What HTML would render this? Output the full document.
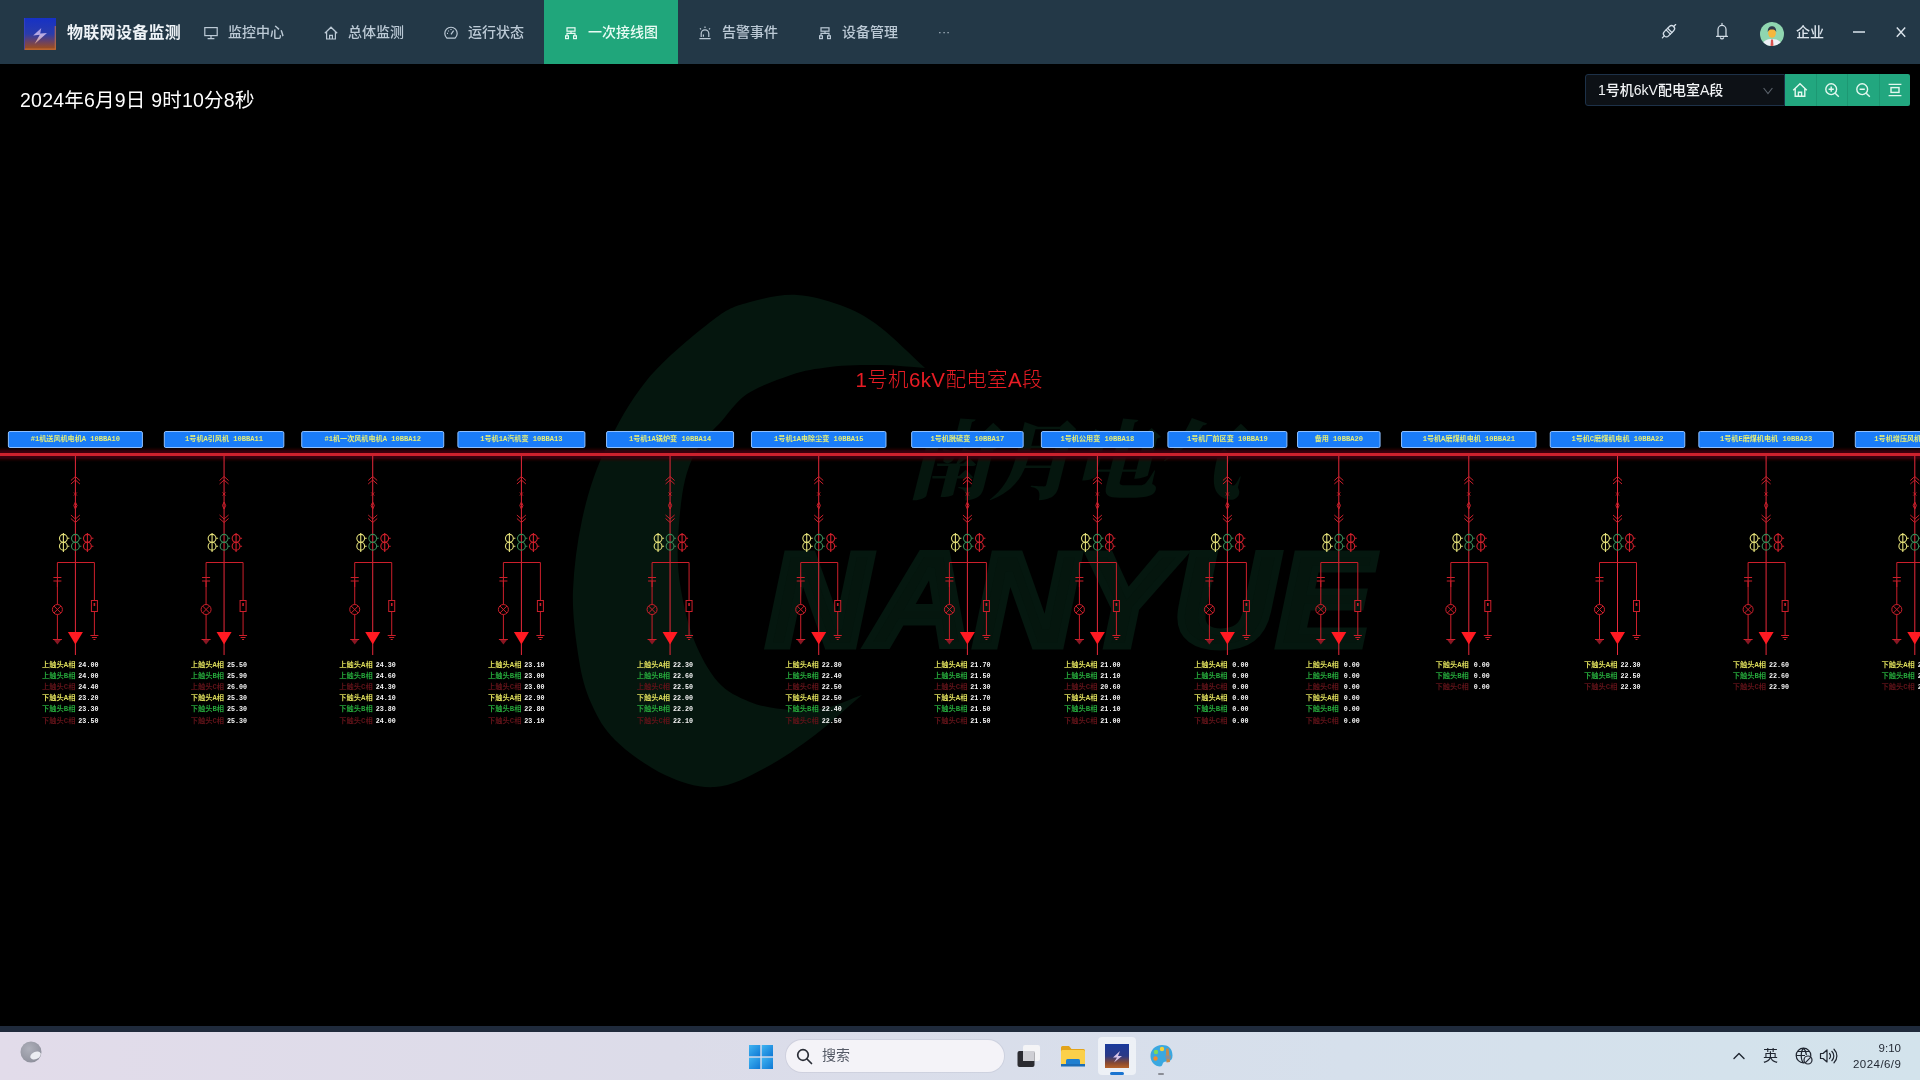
<!DOCTYPE html>
<html lang="zh-CN">
<head>
<meta charset="utf-8">
<title>物联网设备监测</title>
<style>
*{box-sizing:border-box;margin:0;padding:0}
html,body{width:1920px;height:1080px;overflow:hidden;background:#000;}
body{font-family:"Liberation Sans","Noto Sans CJK SC",sans-serif;color:#fff;position:relative}
.hdr{position:absolute;left:0;top:0;width:1920px;height:64px;background:#233847;}
.logo{position:absolute;left:24px;top:18px;width:32px;height:32px}
.brand{position:absolute;left:67px;top:1px;height:64px;line-height:63px;font-size:16px;font-weight:bold;color:#eef3f7;letter-spacing:0.3px;white-space:nowrap}
.nav{position:absolute;left:184px;top:0;height:64px;display:flex}
.nav .it{height:64px;padding:0 20px;display:flex;align-items:center;color:#bccad6;font-size:14px;white-space:nowrap}
.nav .it svg{width:14px;height:14px;margin-right:10px;flex:none;position:relative;top:0.5px}
.nav .it.on{background:#20a67b;color:#e9fbf4}
.nav .it span{display:inline-block;position:relative;top:-1px;font-weight:500}
.hr{position:absolute;top:0;height:64px}
.hr svg{position:absolute}
.user{position:absolute;left:1796px;top:1px;line-height:63px;font-size:14px;font-weight:500;color:#dbe4ec}
.date{position:absolute;left:20px;top:86px;font-size:19.5px;line-height:28px;color:#fff;white-space:nowrap;letter-spacing:0.22px}
.sel{position:absolute;left:1585px;top:74px;width:200px;height:32px;border:1px solid #1d3148;border-radius:3px 0 0 3px;background:#0d1116;font-size:14px;line-height:30px;padding-left:12px;color:#f2f4f6;white-space:nowrap;font-weight:500}
.sel svg{position:absolute;left:177px;top:12px}
.btns{position:absolute;left:1785px;top:74px;width:125px;height:32px;background:#22a77f;border-radius:0 2px 2px 0;display:flex}
.btns div{flex:1;position:relative;border-left:1px solid #1d9873}
.btns div:first-child{border-left:none}
.btns svg{position:absolute;left:50%;top:50%;width:16px;height:16px;margin:-8px 0 0 -8px}
.diag{position:absolute;left:0;top:64px;will-change:transform}
.hdr .brand,.hdr .nav,.hdr .user,.date,.sel,.search,.clock,.ime{will-change:transform}
.diag .lb,.diag .rl,.diag .rv{font-family:"Liberation Mono","Noto Sans Mono CJK SC","Noto Sans CJK SC",monospace;font-weight:bold}
.lb{font-size:7.1px;fill:#e4ee7a}
.rl{font-size:6.8px}
.rv{font-size:6.7px;fill:#f4f4f4}
.strip{position:absolute;left:0;top:1026px;width:1920px;height:6px;background:#1f2a3b}
.tb{position:absolute;left:0;top:1032px;width:1920px;height:48px;background:linear-gradient(90deg,#e2dcea 0%,#dcdce9 35%,#d6e0ec 70%,#d3e3ec 100%)}
.tb svg{position:absolute}
.search{position:absolute;left:786px;top:8px;width:218px;height:32px;border-radius:16px;background:#f4f3f8;box-shadow:0 0 0 1px rgba(120,120,150,.12);font-size:14px;line-height:31px;color:#555a66;padding-left:36px}
.clock{position:absolute;right:19px;top:8px;text-align:right;font-size:11.5px;line-height:16px;color:#1f2530}
.ime{position:absolute;left:1763px;top:14px;font-size:15px;line-height:20px;color:#1f2530}
.actbg{position:absolute;left:1098px;top:5px;width:38px;height:38px;border-radius:4px;background:rgba(255,255,255,.55)}
</style>
</head>
<body>
<div class="hdr">
  <svg class="logo" viewBox="0 0 32 32">
    <defs><linearGradient id="lg" x1="0" y1="0" x2="0" y2="1"><stop offset="0" stop-color="#1631c6"/><stop offset=".5" stop-color="#2a3cab"/><stop offset=".74" stop-color="#6b4263"/><stop offset="1" stop-color="#a9500f"/></linearGradient><linearGradient id="lb" x1="0" y1="0" x2="0" y2="1"><stop offset="0" stop-color="#a99cf0"/><stop offset=".5" stop-color="#cdbbe6"/><stop offset="1" stop-color="#e6a684"/></linearGradient></defs>
    <rect width="32" height="32" fill="url(#lg)"/>
    <path d="M0.500 0V31.500" stroke="#3a44c8" stroke-opacity=".7"/>
    <path d="M1 31.200H31.300V8" fill="none" stroke="#c87444" stroke-width="1.200" stroke-opacity=".75"/>
    <path d="M17.300 10L9.200 17.400L15.800 16.800L10.600 26L23 15L16.200 15.600Z" fill="url(#lb)" fill-opacity=".9"/>
  </svg>
  <div class="brand">物联网设备监测</div>
  <div class="nav">
    <div class="it"><svg viewBox="0 0 14 14" fill="none" stroke="currentColor" stroke-width="1.2"><rect x="0.8" y="1.6" width="12.4" height="8"/><path d="M7 9.6V12.2M3.6 12.6H10.4"/></svg><span>监控中心</span></div>
    <div class="it"><svg viewBox="0 0 14 14" fill="none" stroke="currentColor" stroke-width="1.2"><path d="M0.8 7.2L7 1.2L13.2 7.2M2.6 6V13H11.4V6M5.6 13V9.4H8.4V13"/></svg><span>总体监测</span></div>
    <div class="it"><svg viewBox="0 0 14 14" fill="none" stroke="currentColor" stroke-width="1.2"><path d="M3 12.2A6.2 6.2 0 1 1 11 12.2Z"/><path d="M7 8.4L9.6 4.6M3 7.4H4M7 3V4M4.2 4.6L4.9 5.3"/></svg><span>运行状态</span></div>
    <div class="it on"><svg viewBox="0 0 14 14" fill="none" stroke="currentColor" stroke-width="1.2"><rect x="3" y="1.8" width="8" height="3.4"/><path d="M7 5.2V7.4M3 9.8V7.4H11V9.8"/><rect x="1.6" y="9.8" width="2.8" height="2.8"/><rect x="9.6" y="9.8" width="2.8" height="2.8"/></svg><span>一次接线图</span></div>
    <div class="it"><svg viewBox="0 0 14 14" fill="none" stroke="currentColor" stroke-width="1.2"><path d="M3.2 11V7.6A3.8 3.8 0 0 1 10.8 7.6V11M1.4 12.6H12.6M7 0.6V2M2 2.4L3 3.4M12 2.4L11 3.4M5.4 10.8V8.6"/></svg><span>告警事件</span></div>
    <div class="it"><svg viewBox="0 0 14 14" fill="none" stroke="currentColor" stroke-width="1.2"><rect x="3" y="1.8" width="8" height="3.4"/><path d="M7 5.2V7.4M3 9.8V7.4H11V9.8"/><rect x="1.6" y="9.8" width="2.8" height="2.8"/><rect x="9.6" y="9.8" width="2.8" height="2.8"/></svg><span>设备管理</span></div>
    <div class="it" style="font-weight:bold;letter-spacing:0.5px;font-size:11px"><span style="top:0">···</span></div>
  </div>
  <!-- right icons -->
  <svg style="position:absolute;left:1661px;top:23px" width="16" height="16" viewBox="0 0 16 16" fill="none" stroke="#d3dee8" stroke-width="1.25" stroke-linecap="round" stroke-linejoin="round"><g transform="translate(8 8.200) rotate(-45)"><path d="M-3.600 -3H3.600A3 3 0 0 1 3.600 3H-3.600A3 3 0 0 1 -3.600 -3Z"/><path d="M-1.100 -3V3M1.100 -3V3M-6.600 0H-9.400M6.600 0H9.400"/></g></svg>
  <svg style="position:absolute;left:1713.5px;top:22px" width="16" height="18" viewBox="0 0 16 18" fill="none" stroke="#d3dee8" stroke-width="1.25" stroke-linecap="round" stroke-linejoin="round"><path d="M2.600 14.400H13.400M4 14.400V7.400A4 4 0 0 1 12 7.400V14.400M8 1.400V3.200M6.400 15.800A1.700 1.700 0 0 0 9.600 15.800"/></svg>
  <svg style="position:absolute;left:1760px;top:22px" width="24" height="24" viewBox="0 0 24 24"><defs><clipPath id="av"><circle cx="12" cy="12" r="12"/></clipPath></defs><g clip-path="url(#av)"><rect width="24" height="24" fill="#8fd6b0"/><path d="M2 24C3 18.500 7 17 12 17S21 18.500 22 24Z" fill="#eef0f6"/><path d="M11 17.500H13L13.500 24H10.500Z" fill="#d9534f"/><ellipse cx="12" cy="11" rx="3.900" ry="4.800" fill="#f6b73c"/><path d="M7.800 10C7.500 5.500 10 4.300 12 4.300S16.500 5.500 16.200 10C15.500 8 14 7.600 12 7.600S8.500 8 7.800 10Z" fill="#2f3a4a"/></g></svg>
  <div class="user">企业</div>
  <svg style="position:absolute;left:1852px;top:30px" width="14" height="4" viewBox="0 0 14 4"><path d="M1 2H13" stroke="#dbe4ec" stroke-width="1.500"/></svg>
  <svg style="position:absolute;left:1895px;top:26px" width="12" height="12" viewBox="0 0 12 12"><path d="M1.800 1.500L10.200 10.800M10.200 1.500L1.800 10.800" stroke="#dbe4ec" stroke-width="1.400"/></svg>
</div>

<div class="date">2024年6月9日 9时10分8秒</div>
<div class="sel">1号机6kV配电室A段<svg width="10" height="8" viewBox="0 0 10 8"><path d="M0.600 1L5 6.600L9.400 1" fill="none" stroke="#5b626b" stroke-width="1.100"/></svg></div>
<div class="btns">
  <div><svg viewBox="0 0 16 16" fill="none" stroke="#e3f8ef" stroke-width="1.400"><path d="M1.200 8.200L8 1.800L14.800 8.200M3.200 6.800V14.200H12.800V6.800M6.400 14.200V10.200H9.600V14.200"/></svg></div>
  <div><svg viewBox="0 0 16 16" fill="none" stroke="#e3f8ef" stroke-width="1.400"><circle cx="7.200" cy="7.200" r="5.400"/><path d="M11.200 11.200L14.800 14.800M4.600 7.200H9.800M7.200 4.600V9.800"/></svg></div>
  <div><svg viewBox="0 0 16 16" fill="none" stroke="#e3f8ef" stroke-width="1.400"><circle cx="7.200" cy="7.200" r="5.400"/><path d="M11.200 11.200L14.800 14.800M4.600 7.200H9.800"/></svg></div>
  <div><svg viewBox="0 0 16 16" fill="none" stroke="#e3f8ef" stroke-width="1.400"><path d="M1.600 2.400H14.400M1.600 13.600H14.400"/><rect x="4" y="5.600" width="8" height="4.800"/></svg></div>
</div>

<svg class="diag" width="1920" height="962" viewBox="0 64 1920 962">
<defs>
<g id="feeder" fill="none" stroke="#cc1f2b" stroke-width="1">
  <path d="M0 456V655" stroke="#e8283a"/>
  <path d="M-4.5 480.5L0 476.5L4.5 480.5M-4.5 484L0 480L4.5 484"/>
  <path d="M-1.5 492.5L1.5 495.5M1.5 492.5L-1.5 495.5"/>
  <path d="M0 502L1.6 505.5L0 509L-1.6 505.5Z"/>
  <path d="M-4.5 515L0 519L4.5 515M-4.5 518.5L0 522.5L4.5 518.5"/>
  <g id="ct">
  </g>
  <path d="M-18 587V562.5H19V600"/>
  <path d="M-22 577.5H-14M-22 581H-14"/>
  <path d="M-18 581V604.5M-18 614.5V639.5"/>
  <circle cx="-18" cy="609.5" r="5"/>
  <path d="M-21.5 606L-14.5 613M-14.5 606L-21.5 613"/>
  <path d="M-22.5 639.5H-13.5"/><path d="M-21.5 640H-14.5L-18 644.5Z" fill="#8a1622" stroke="none"/>
  <rect x="16" y="600.5" width="6" height="11"/>
  <path d="M19 603V606" stroke-width="1.6"/>
  <path d="M19 611.5V635M15 635.5H23M16.5 637.5H21.5M18 639.5H20"/>
  <path d="M-7.5 632H7.5L0 644.5Z" fill="#ff1a22" stroke="none"/>
</g>
<filter id="bl" x="-5%" y="-100%" width="110%" height="300%"><feGaussianBlur stdDeviation="0 1.6"/></filter>
<g id="cts" fill="none" stroke-width="1.1">
  <g stroke="#e4e07a"><circle cx="-12" cy="538.3" r="3.9"/><circle cx="-12" cy="546.2" r="3.9"/><path d="M-12 533V552M-8 538.3H-6M-8 546.2H-6"/></g>
  <g stroke="#3a8a58"><circle cx="0" cy="538.3" r="3.9"/><circle cx="0" cy="546.2" r="3.9"/><path d="M4 538.3H6M4 546.2H6"/></g>
  <g stroke="#d0202c"><circle cx="12" cy="538.3" r="3.9"/><circle cx="12" cy="546.2" r="3.9"/><path d="M12 533V552M16 538.3H18M16 546.2H18"/></g>
</g>
</defs>
<g class="wm" fill="#05160e">
<path d="M925 368C910 354 894 338 880 327C866 316 854 310 840 305C826 300 812 296 797 295C782 294 764 298 750 302C736 306 730 307 713 320C696 333 665 358 647 380C629 402 616 427 605 450C594 473 587 497 582 520C577 543 574 567 573 590C572 613 576 641 579 660C582 679 586 692 592 705C598 718 603 728 615 740C627 752 648 767 665 775C682 783 698 788 715 787C732 786 748 777 765 768C782 759 799 747 815 735C831 723 846 708 862 695C850 699 837 706 825 708C813 710 802 711 790 710C778 709 762 707 750 702C738 697 727 692 718 682C709 672 700 655 694 640C688 625 684 607 681 590C678 573 677 558 678 540C679 522 681 496 685 480C689 464 694 454 700 445C706 436 711 432 719 424C727 416 735 402 747 394C759 386 777 380 791 375C805 370 815 369 830 367C845 365 864 365 880 365C896 365 910 367 925 368Z"/>
<text x="766" y="646" font-size="133" font-weight="bold" font-style="italic" stroke="#05170f" stroke-width="7" stroke-linejoin="miter" textLength="606" lengthAdjust="spacingAndGlyphs" font-family="Liberation Sans, sans-serif">NANYUE</text>
<text x="905" y="492" font-size="86" font-weight="900" font-style="italic" textLength="335" lengthAdjust="spacing" font-family="Liberation Serif, Noto Serif CJK SC, serif">南月电气</text>
</g>
<text x="949" y="387" text-anchor="middle" fill="#e81c24" font-size="20.5" font-family="Liberation Sans, Noto Sans CJK SC, sans-serif" font-weight="300" textLength="187">1号机6kV配电室A段</text>
<rect x="0" y="449.5" width="1920" height="10" fill="#3a0508" filter="url(#bl)"/>
<rect x="0" y="453" width="1920" height="3" fill="#cc212d"/>
<rect x="8.4" y="431.5" width="134.0" height="16" rx="1.5" fill="#1a7cf8" stroke="#8fc0ff" stroke-width="1"/>
<text x="75.4" y="440.6" text-anchor="middle" class="lb">#1机送风机电机A  10BBA10</text>
<use href="#feeder" x="75.4"/><use href="#cts" x="75.4"/>
<text x="75.4" y="667" text-anchor="end" class="rl" fill="#dcdc5a" textLength="33.4" lengthAdjust="spacingAndGlyphs">上触头A相</text><text x="88.4" y="667" text-anchor="middle" class="rv">24.00</text>
<text x="75.4" y="678" text-anchor="end" class="rl" fill="#25a53a" textLength="33.4" lengthAdjust="spacingAndGlyphs">上触头B相</text><text x="88.4" y="678" text-anchor="middle" class="rv">24.00</text>
<text x="75.4" y="689" text-anchor="end" class="rl" fill="#621319" textLength="33.4" lengthAdjust="spacingAndGlyphs">上触头C相</text><text x="88.4" y="689" text-anchor="middle" class="rv">24.40</text>
<text x="75.4" y="700" text-anchor="end" class="rl" fill="#dcdc5a" textLength="33.4" lengthAdjust="spacingAndGlyphs">下触头A相</text><text x="88.4" y="700" text-anchor="middle" class="rv">23.20</text>
<text x="75.4" y="711" text-anchor="end" class="rl" fill="#25a53a" textLength="33.4" lengthAdjust="spacingAndGlyphs">下触头B相</text><text x="88.4" y="711" text-anchor="middle" class="rv">23.30</text>
<text x="75.4" y="723" text-anchor="end" class="rl" fill="#621319" textLength="33.4" lengthAdjust="spacingAndGlyphs">下触头C相</text><text x="88.4" y="723" text-anchor="middle" class="rv">23.50</text>
<rect x="164.32" y="431.5" width="119.5" height="16" rx="1.5" fill="#1a7cf8" stroke="#8fc0ff" stroke-width="1"/>
<text x="224.07" y="440.6" text-anchor="middle" class="lb">1号机A引风机  10BBA11</text>
<use href="#feeder" x="224.07"/><use href="#cts" x="224.07"/>
<text x="224.07" y="667" text-anchor="end" class="rl" fill="#dcdc5a" textLength="33.4" lengthAdjust="spacingAndGlyphs">上触头A相</text><text x="237.07" y="667" text-anchor="middle" class="rv">25.50</text>
<text x="224.07" y="678" text-anchor="end" class="rl" fill="#25a53a" textLength="33.4" lengthAdjust="spacingAndGlyphs">上触头B相</text><text x="237.07" y="678" text-anchor="middle" class="rv">25.90</text>
<text x="224.07" y="689" text-anchor="end" class="rl" fill="#621319" textLength="33.4" lengthAdjust="spacingAndGlyphs">上触头C相</text><text x="237.07" y="689" text-anchor="middle" class="rv">26.00</text>
<text x="224.07" y="700" text-anchor="end" class="rl" fill="#dcdc5a" textLength="33.4" lengthAdjust="spacingAndGlyphs">下触头A相</text><text x="237.07" y="700" text-anchor="middle" class="rv">25.30</text>
<text x="224.07" y="711" text-anchor="end" class="rl" fill="#25a53a" textLength="33.4" lengthAdjust="spacingAndGlyphs">下触头B相</text><text x="237.07" y="711" text-anchor="middle" class="rv">25.30</text>
<text x="224.07" y="723" text-anchor="end" class="rl" fill="#621319" textLength="33.4" lengthAdjust="spacingAndGlyphs">下触头C相</text><text x="237.07" y="723" text-anchor="middle" class="rv">25.30</text>
<rect x="301.73" y="431.5" width="142.0" height="16" rx="1.5" fill="#1a7cf8" stroke="#8fc0ff" stroke-width="1"/>
<text x="372.73" y="440.6" text-anchor="middle" class="lb">#1机一次风机电机A  10BBA12</text>
<use href="#feeder" x="372.73"/><use href="#cts" x="372.73"/>
<text x="372.73" y="667" text-anchor="end" class="rl" fill="#dcdc5a" textLength="33.4" lengthAdjust="spacingAndGlyphs">上触头A相</text><text x="385.73" y="667" text-anchor="middle" class="rv">24.30</text>
<text x="372.73" y="678" text-anchor="end" class="rl" fill="#25a53a" textLength="33.4" lengthAdjust="spacingAndGlyphs">上触头B相</text><text x="385.73" y="678" text-anchor="middle" class="rv">24.60</text>
<text x="372.73" y="689" text-anchor="end" class="rl" fill="#621319" textLength="33.4" lengthAdjust="spacingAndGlyphs">上触头C相</text><text x="385.73" y="689" text-anchor="middle" class="rv">24.30</text>
<text x="372.73" y="700" text-anchor="end" class="rl" fill="#dcdc5a" textLength="33.4" lengthAdjust="spacingAndGlyphs">下触头A相</text><text x="385.73" y="700" text-anchor="middle" class="rv">24.10</text>
<text x="372.73" y="711" text-anchor="end" class="rl" fill="#25a53a" textLength="33.4" lengthAdjust="spacingAndGlyphs">下触头B相</text><text x="385.73" y="711" text-anchor="middle" class="rv">23.80</text>
<text x="372.73" y="723" text-anchor="end" class="rl" fill="#621319" textLength="33.4" lengthAdjust="spacingAndGlyphs">下触头C相</text><text x="385.73" y="723" text-anchor="middle" class="rv">24.00</text>
<rect x="457.9" y="431.5" width="127.0" height="16" rx="1.5" fill="#1a7cf8" stroke="#8fc0ff" stroke-width="1"/>
<text x="521.4" y="440.6" text-anchor="middle" class="lb">1号机1A汽机变  10BBA13</text>
<use href="#feeder" x="521.4"/><use href="#cts" x="521.4"/>
<text x="521.4" y="667" text-anchor="end" class="rl" fill="#dcdc5a" textLength="33.4" lengthAdjust="spacingAndGlyphs">上触头A相</text><text x="534.4" y="667" text-anchor="middle" class="rv">23.10</text>
<text x="521.4" y="678" text-anchor="end" class="rl" fill="#25a53a" textLength="33.4" lengthAdjust="spacingAndGlyphs">上触头B相</text><text x="534.4" y="678" text-anchor="middle" class="rv">23.00</text>
<text x="521.4" y="689" text-anchor="end" class="rl" fill="#621319" textLength="33.4" lengthAdjust="spacingAndGlyphs">上触头C相</text><text x="534.4" y="689" text-anchor="middle" class="rv">23.00</text>
<text x="521.4" y="700" text-anchor="end" class="rl" fill="#dcdc5a" textLength="33.4" lengthAdjust="spacingAndGlyphs">下触头A相</text><text x="534.4" y="700" text-anchor="middle" class="rv">22.90</text>
<text x="521.4" y="711" text-anchor="end" class="rl" fill="#25a53a" textLength="33.4" lengthAdjust="spacingAndGlyphs">下触头B相</text><text x="534.4" y="711" text-anchor="middle" class="rv">22.80</text>
<text x="521.4" y="723" text-anchor="end" class="rl" fill="#621319" textLength="33.4" lengthAdjust="spacingAndGlyphs">下触头C相</text><text x="534.4" y="723" text-anchor="middle" class="rv">23.10</text>
<rect x="606.57" y="431.5" width="127.0" height="16" rx="1.5" fill="#1a7cf8" stroke="#8fc0ff" stroke-width="1"/>
<text x="670.07" y="440.6" text-anchor="middle" class="lb">1号机1A锅炉变  10BBA14</text>
<use href="#feeder" x="670.07"/><use href="#cts" x="670.07"/>
<text x="670.07" y="667" text-anchor="end" class="rl" fill="#dcdc5a" textLength="33.4" lengthAdjust="spacingAndGlyphs">上触头A相</text><text x="683.07" y="667" text-anchor="middle" class="rv">22.30</text>
<text x="670.07" y="678" text-anchor="end" class="rl" fill="#25a53a" textLength="33.4" lengthAdjust="spacingAndGlyphs">上触头B相</text><text x="683.07" y="678" text-anchor="middle" class="rv">22.60</text>
<text x="670.07" y="689" text-anchor="end" class="rl" fill="#621319" textLength="33.4" lengthAdjust="spacingAndGlyphs">上触头C相</text><text x="683.07" y="689" text-anchor="middle" class="rv">22.50</text>
<text x="670.07" y="700" text-anchor="end" class="rl" fill="#dcdc5a" textLength="33.4" lengthAdjust="spacingAndGlyphs">下触头A相</text><text x="683.07" y="700" text-anchor="middle" class="rv">22.00</text>
<text x="670.07" y="711" text-anchor="end" class="rl" fill="#25a53a" textLength="33.4" lengthAdjust="spacingAndGlyphs">下触头B相</text><text x="683.07" y="711" text-anchor="middle" class="rv">22.20</text>
<text x="670.07" y="723" text-anchor="end" class="rl" fill="#621319" textLength="33.4" lengthAdjust="spacingAndGlyphs">下触头C相</text><text x="683.07" y="723" text-anchor="middle" class="rv">22.10</text>
<rect x="751.48" y="431.5" width="134.5" height="16" rx="1.5" fill="#1a7cf8" stroke="#8fc0ff" stroke-width="1"/>
<text x="818.73" y="440.6" text-anchor="middle" class="lb">1号机1A电除尘变  10BBA15</text>
<use href="#feeder" x="818.73"/><use href="#cts" x="818.73"/>
<text x="818.73" y="667" text-anchor="end" class="rl" fill="#dcdc5a" textLength="33.4" lengthAdjust="spacingAndGlyphs">上触头A相</text><text x="831.73" y="667" text-anchor="middle" class="rv">22.80</text>
<text x="818.73" y="678" text-anchor="end" class="rl" fill="#25a53a" textLength="33.4" lengthAdjust="spacingAndGlyphs">上触头B相</text><text x="831.73" y="678" text-anchor="middle" class="rv">22.40</text>
<text x="818.73" y="689" text-anchor="end" class="rl" fill="#621319" textLength="33.4" lengthAdjust="spacingAndGlyphs">上触头C相</text><text x="831.73" y="689" text-anchor="middle" class="rv">22.50</text>
<text x="818.73" y="700" text-anchor="end" class="rl" fill="#dcdc5a" textLength="33.4" lengthAdjust="spacingAndGlyphs">下触头A相</text><text x="831.73" y="700" text-anchor="middle" class="rv">22.50</text>
<text x="818.73" y="711" text-anchor="end" class="rl" fill="#25a53a" textLength="33.4" lengthAdjust="spacingAndGlyphs">下触头B相</text><text x="831.73" y="711" text-anchor="middle" class="rv">22.40</text>
<text x="818.73" y="723" text-anchor="end" class="rl" fill="#621319" textLength="33.4" lengthAdjust="spacingAndGlyphs">下触头C相</text><text x="831.73" y="723" text-anchor="middle" class="rv">22.50</text>
<rect x="911.65" y="431.5" width="111.5" height="16" rx="1.5" fill="#1a7cf8" stroke="#8fc0ff" stroke-width="1"/>
<text x="967.4" y="440.6" text-anchor="middle" class="lb">1号机脱硫变  10BBA17</text>
<use href="#feeder" x="967.4"/><use href="#cts" x="967.4"/>
<text x="967.4" y="667" text-anchor="end" class="rl" fill="#dcdc5a" textLength="33.4" lengthAdjust="spacingAndGlyphs">上触头A相</text><text x="980.4" y="667" text-anchor="middle" class="rv">21.70</text>
<text x="967.4" y="678" text-anchor="end" class="rl" fill="#25a53a" textLength="33.4" lengthAdjust="spacingAndGlyphs">上触头B相</text><text x="980.4" y="678" text-anchor="middle" class="rv">21.50</text>
<text x="967.4" y="689" text-anchor="end" class="rl" fill="#621319" textLength="33.4" lengthAdjust="spacingAndGlyphs">上触头C相</text><text x="980.4" y="689" text-anchor="middle" class="rv">21.30</text>
<text x="967.4" y="700" text-anchor="end" class="rl" fill="#dcdc5a" textLength="33.4" lengthAdjust="spacingAndGlyphs">下触头A相</text><text x="980.4" y="700" text-anchor="middle" class="rv">21.70</text>
<text x="967.4" y="711" text-anchor="end" class="rl" fill="#25a53a" textLength="33.4" lengthAdjust="spacingAndGlyphs">下触头B相</text><text x="980.4" y="711" text-anchor="middle" class="rv">21.50</text>
<text x="967.4" y="723" text-anchor="end" class="rl" fill="#621319" textLength="33.4" lengthAdjust="spacingAndGlyphs">下触头C相</text><text x="980.4" y="723" text-anchor="middle" class="rv">21.50</text>
<rect x="1041.4" y="431.5" width="112.0" height="16" rx="1.5" fill="#1a7cf8" stroke="#8fc0ff" stroke-width="1"/>
<text x="1097.4" y="440.6" text-anchor="middle" class="lb">1号机公用变  10BBA18</text>
<use href="#feeder" x="1097.4"/><use href="#cts" x="1097.4"/>
<text x="1097.4" y="667" text-anchor="end" class="rl" fill="#dcdc5a" textLength="33.4" lengthAdjust="spacingAndGlyphs">上触头A相</text><text x="1110.4" y="667" text-anchor="middle" class="rv">21.00</text>
<text x="1097.4" y="678" text-anchor="end" class="rl" fill="#25a53a" textLength="33.4" lengthAdjust="spacingAndGlyphs">上触头B相</text><text x="1110.4" y="678" text-anchor="middle" class="rv">21.10</text>
<text x="1097.4" y="689" text-anchor="end" class="rl" fill="#621319" textLength="33.4" lengthAdjust="spacingAndGlyphs">上触头C相</text><text x="1110.4" y="689" text-anchor="middle" class="rv">20.60</text>
<text x="1097.4" y="700" text-anchor="end" class="rl" fill="#dcdc5a" textLength="33.4" lengthAdjust="spacingAndGlyphs">下触头A相</text><text x="1110.4" y="700" text-anchor="middle" class="rv">21.00</text>
<text x="1097.4" y="711" text-anchor="end" class="rl" fill="#25a53a" textLength="33.4" lengthAdjust="spacingAndGlyphs">下触头B相</text><text x="1110.4" y="711" text-anchor="middle" class="rv">21.10</text>
<text x="1097.4" y="723" text-anchor="end" class="rl" fill="#621319" textLength="33.4" lengthAdjust="spacingAndGlyphs">下触头C相</text><text x="1110.4" y="723" text-anchor="middle" class="rv">21.00</text>
<rect x="1167.9" y="431.5" width="119.0" height="16" rx="1.5" fill="#1a7cf8" stroke="#8fc0ff" stroke-width="1"/>
<text x="1227.4" y="440.6" text-anchor="middle" class="lb">1号机厂前区变  10BBA19</text>
<use href="#feeder" x="1227.4"/><use href="#cts" x="1227.4"/>
<text x="1227.4" y="667" text-anchor="end" class="rl" fill="#dcdc5a" textLength="33.4" lengthAdjust="spacingAndGlyphs">上触头A相</text><text x="1240.4" y="667" text-anchor="middle" class="rv">0.00</text>
<text x="1227.4" y="678" text-anchor="end" class="rl" fill="#25a53a" textLength="33.4" lengthAdjust="spacingAndGlyphs">上触头B相</text><text x="1240.4" y="678" text-anchor="middle" class="rv">0.00</text>
<text x="1227.4" y="689" text-anchor="end" class="rl" fill="#621319" textLength="33.4" lengthAdjust="spacingAndGlyphs">上触头C相</text><text x="1240.4" y="689" text-anchor="middle" class="rv">0.00</text>
<text x="1227.4" y="700" text-anchor="end" class="rl" fill="#dcdc5a" textLength="33.4" lengthAdjust="spacingAndGlyphs">下触头A相</text><text x="1240.4" y="700" text-anchor="middle" class="rv">0.00</text>
<text x="1227.4" y="711" text-anchor="end" class="rl" fill="#25a53a" textLength="33.4" lengthAdjust="spacingAndGlyphs">下触头B相</text><text x="1240.4" y="711" text-anchor="middle" class="rv">0.00</text>
<text x="1227.4" y="723" text-anchor="end" class="rl" fill="#621319" textLength="33.4" lengthAdjust="spacingAndGlyphs">下触头C相</text><text x="1240.4" y="723" text-anchor="middle" class="rv">0.00</text>
<rect x="1297.55" y="431.5" width="82.5" height="16" rx="1.5" fill="#1a7cf8" stroke="#8fc0ff" stroke-width="1"/>
<text x="1338.8" y="440.6" text-anchor="middle" class="lb">备用  10BBA20</text>
<use href="#feeder" x="1338.8"/><use href="#cts" x="1338.8"/>
<text x="1338.8" y="667" text-anchor="end" class="rl" fill="#dcdc5a" textLength="33.4" lengthAdjust="spacingAndGlyphs">上触头A相</text><text x="1351.8" y="667" text-anchor="middle" class="rv">0.00</text>
<text x="1338.8" y="678" text-anchor="end" class="rl" fill="#25a53a" textLength="33.4" lengthAdjust="spacingAndGlyphs">上触头B相</text><text x="1351.8" y="678" text-anchor="middle" class="rv">0.00</text>
<text x="1338.8" y="689" text-anchor="end" class="rl" fill="#621319" textLength="33.4" lengthAdjust="spacingAndGlyphs">上触头C相</text><text x="1351.8" y="689" text-anchor="middle" class="rv">0.00</text>
<text x="1338.8" y="700" text-anchor="end" class="rl" fill="#dcdc5a" textLength="33.4" lengthAdjust="spacingAndGlyphs">下触头A相</text><text x="1351.8" y="700" text-anchor="middle" class="rv">0.00</text>
<text x="1338.8" y="711" text-anchor="end" class="rl" fill="#25a53a" textLength="33.4" lengthAdjust="spacingAndGlyphs">下触头B相</text><text x="1351.8" y="711" text-anchor="middle" class="rv">0.00</text>
<text x="1338.8" y="723" text-anchor="end" class="rl" fill="#621319" textLength="33.4" lengthAdjust="spacingAndGlyphs">下触头C相</text><text x="1351.8" y="723" text-anchor="middle" class="rv">0.00</text>
<rect x="1401.55" y="431.5" width="134.5" height="16" rx="1.5" fill="#1a7cf8" stroke="#8fc0ff" stroke-width="1"/>
<text x="1468.8" y="440.6" text-anchor="middle" class="lb">1号机A磨煤机电机  10BBA21</text>
<use href="#feeder" x="1468.8"/><use href="#cts" x="1468.8"/>
<text x="1468.8" y="667" text-anchor="end" class="rl" fill="#dcdc5a" textLength="33.4" lengthAdjust="spacingAndGlyphs">下触头A相</text><text x="1481.8" y="667" text-anchor="middle" class="rv">0.00</text>
<text x="1468.8" y="678" text-anchor="end" class="rl" fill="#25a53a" textLength="33.4" lengthAdjust="spacingAndGlyphs">下触头B相</text><text x="1481.8" y="678" text-anchor="middle" class="rv">0.00</text>
<text x="1468.8" y="689" text-anchor="end" class="rl" fill="#621319" textLength="33.4" lengthAdjust="spacingAndGlyphs">下触头C相</text><text x="1481.8" y="689" text-anchor="middle" class="rv">0.00</text>
<rect x="1550.25" y="431.5" width="134.5" height="16" rx="1.5" fill="#1a7cf8" stroke="#8fc0ff" stroke-width="1"/>
<text x="1617.5" y="440.6" text-anchor="middle" class="lb">1号机C磨煤机电机  10BBA22</text>
<use href="#feeder" x="1617.5"/><use href="#cts" x="1617.5"/>
<text x="1617.5" y="667" text-anchor="end" class="rl" fill="#dcdc5a" textLength="33.4" lengthAdjust="spacingAndGlyphs">下触头A相</text><text x="1630.5" y="667" text-anchor="middle" class="rv">22.30</text>
<text x="1617.5" y="678" text-anchor="end" class="rl" fill="#25a53a" textLength="33.4" lengthAdjust="spacingAndGlyphs">下触头B相</text><text x="1630.5" y="678" text-anchor="middle" class="rv">22.50</text>
<text x="1617.5" y="689" text-anchor="end" class="rl" fill="#621319" textLength="33.4" lengthAdjust="spacingAndGlyphs">下触头C相</text><text x="1630.5" y="689" text-anchor="middle" class="rv">22.30</text>
<rect x="1698.85" y="431.5" width="134.5" height="16" rx="1.5" fill="#1a7cf8" stroke="#8fc0ff" stroke-width="1"/>
<text x="1766.1" y="440.6" text-anchor="middle" class="lb">1号机E磨煤机电机  10BBA23</text>
<use href="#feeder" x="1766.1"/><use href="#cts" x="1766.1"/>
<text x="1766.1" y="667" text-anchor="end" class="rl" fill="#dcdc5a" textLength="33.4" lengthAdjust="spacingAndGlyphs">下触头A相</text><text x="1779.1" y="667" text-anchor="middle" class="rv">22.60</text>
<text x="1766.1" y="678" text-anchor="end" class="rl" fill="#25a53a" textLength="33.4" lengthAdjust="spacingAndGlyphs">下触头B相</text><text x="1779.1" y="678" text-anchor="middle" class="rv">22.60</text>
<text x="1766.1" y="689" text-anchor="end" class="rl" fill="#621319" textLength="33.4" lengthAdjust="spacingAndGlyphs">下触头C相</text><text x="1779.1" y="689" text-anchor="middle" class="rv">22.90</text>
<rect x="1855.3" y="431.5" width="119.0" height="16" rx="1.5" fill="#1a7cf8" stroke="#8fc0ff" stroke-width="1"/>
<text x="1914.8" y="440.6" text-anchor="middle" class="lb">1号机增压风机  10BBA24</text>
<use href="#feeder" x="1914.8"/><use href="#cts" x="1914.8"/>
<text x="1914.8" y="667" text-anchor="end" class="rl" fill="#dcdc5a" textLength="33.4" lengthAdjust="spacingAndGlyphs">下触头A相</text><text x="1927.8" y="667" text-anchor="middle" class="rv">22.40</text>
<text x="1914.8" y="678" text-anchor="end" class="rl" fill="#25a53a" textLength="33.4" lengthAdjust="spacingAndGlyphs">下触头B相</text><text x="1927.8" y="678" text-anchor="middle" class="rv">22.50</text>
<text x="1914.8" y="689" text-anchor="end" class="rl" fill="#621319" textLength="33.4" lengthAdjust="spacingAndGlyphs">下触头C相</text><text x="1927.8" y="689" text-anchor="middle" class="rv">22.60</text>
</svg>

<div class="strip"></div>
<div class="tb">
  <!-- left weather/edge-like icon -->
  <svg style="left:20px;top:8px" width="24" height="24" viewBox="0 0 24 24"><defs><radialGradient id="wg" cx=".4" cy=".35" r=".7"><stop offset="0" stop-color="#aeb0ba"/><stop offset="1" stop-color="#8e909c"/></radialGradient></defs><circle cx="11" cy="12" r="10.500" fill="url(#wg)"/><ellipse cx="15.500" cy="15.500" rx="5.500" ry="3.600" transform="rotate(-25 15.500 15.500)" fill="#eceef2"/></svg>
  <!-- windows logo -->
  <svg style="left:749px;top:13px" width="24" height="24" viewBox="0 0 24 24"><defs><linearGradient id="wl" x1="0" y1="0" x2="1" y2="1"><stop offset="0" stop-color="#3fb4f2"/><stop offset="1" stop-color="#0f78d4"/></linearGradient></defs><g fill="url(#wl)"><rect x="0" y="0" width="11.300" height="11.300"/><rect x="12.700" y="0" width="11.300" height="11.300"/><rect x="0" y="12.700" width="11.300" height="11.300"/><rect x="12.700" y="12.700" width="11.300" height="11.300"/></g></svg>
  <div class="search">搜索<svg style="left:10px;top:8px" width="17" height="17" viewBox="0 0 17 17" fill="none" stroke="#2a2d36" stroke-width="1.700" stroke-linecap="round"><circle cx="7" cy="7" r="5.300"/><path d="M11 11L15.500 15.500"/></svg></div>
  <!-- task view -->
  <svg style="left:1016px;top:11px" width="26" height="26" viewBox="0 0 26 26"><rect x="7" y="2" width="17" height="16" rx="2" fill="#f4f4f6"/><rect x="1.500" y="8" width="17" height="16" rx="2" fill="#2b2b30"/><rect x="7" y="8" width="11.500" height="10" fill="#cfcfd4"/></svg>
  <!-- explorer -->
  <svg style="left:1060px;top:11px" width="26" height="26" viewBox="0 0 26 26"><path d="M1 4.500A1.500 1.500 0 0 1 2.500 3H9L11.500 6H23.500A1.500 1.500 0 0 1 25 7.500V10H1Z" fill="#e3a41a"/><rect x="1" y="7" width="24" height="16" rx="1.500" fill="#fbd04a"/><path d="M6 23V17.500A1.500 1.500 0 0 1 7.500 16H18.500A1.500 1.500 0 0 1 20 17.500V23Z" fill="#1f7fd0"/><rect x="1" y="21" width="24" height="2.500" fill="#1b6db8"/></svg>
  <!-- active app -->
  <div class="actbg"></div>
  <svg style="left:1105px;top:12px" width="24" height="24" viewBox="0 0 24 24"><defs><linearGradient id="ag" x1="0" y1="0" x2="0" y2="1"><stop offset="0" stop-color="#1a3a9c"/><stop offset=".5" stop-color="#2b3a86"/><stop offset=".8" stop-color="#8a4a30"/><stop offset="1" stop-color="#b8642a"/></linearGradient></defs><rect width="24" height="24" fill="url(#ag)"/><path d="M15 7L8 13.500H12L9 18.500L17 12H13Z" fill="#d8c4e8"/></svg>
  <div style="position:absolute;left:1110px;top:40px;width:14px;height:3px;border-radius:2px;background:#1a74d0"></div>
  <!-- paint-like -->
  <svg style="left:1149px;top:11px" width="26" height="26" viewBox="0 0 26 26"><path d="M13 2C6 2 1.500 7 1.500 13S6 23.500 11 23.500C14 23.500 13 20 15 19C17 18 23.500 20 23.500 12.500S19 2 13 2Z" fill="#3aa8e0"/><circle cx="7" cy="9" r="2.200" fill="#7ed957"/><circle cx="13" cy="6" r="2.200" fill="#f2d13a"/><circle cx="6.500" cy="15.500" r="2.200" fill="#f08a2e"/><path d="M17 6L19.500 5L21 19L17.500 19.500Z" fill="#c78a4a"/><path d="M16 12.500H22L21.500 16H17Z" fill="#8a8f98"/></svg>
  <div style="position:absolute;left:1158px;top:40.5px;width:6px;height:2.5px;border-radius:2px;background:#8a8d96"></div>
  <!-- tray -->
  <svg style="left:1733px;top:20px" width="12" height="8" viewBox="0 0 12 8" fill="none" stroke="#1f2530" stroke-width="1.400" stroke-linecap="round" stroke-linejoin="round"><path d="M1 6.500L6 1.500L11 6.500"/></svg>
  <div class="ime">英</div>
  <svg style="left:1795px;top:15px" width="18" height="18" viewBox="0 0 18 18" fill="none" stroke="#1f2530" stroke-width="1.200"><circle cx="8.500" cy="8.500" r="7.300"/><path d="M1.200 8.500H10M8.500 1.200C5.500 4 5.500 13 8.500 15.800M8.500 1.200C10.500 3 11.300 5.500 11.400 8M2.600 4.500H14.400"/><circle cx="13" cy="13" r="4" fill="#d6e1ec"/><path d="M10.200 15.800L15.800 10.200"/></svg>
  <svg style="left:1819px;top:15px" width="20" height="18" viewBox="0 0 20 18" fill="none" stroke="#1f2530" stroke-width="1.200" stroke-linecap="round" stroke-linejoin="round"><path d="M1.500 6.500H4L8 3V15L4 11.500H1.500Z"/><path d="M10.500 6.500A3.500 3.500 0 0 1 10.500 11.500M12.800 4.300A6.500 6.500 0 0 1 12.800 13.700M15 2.200A9.500 9.500 0 0 1 15 15.800"/></svg>
  <div class="clock">9:10<br><span style="letter-spacing:0.45px;margin-right:-0.45px">2024/6/9</span></div>
</div>
</body>
</html>
